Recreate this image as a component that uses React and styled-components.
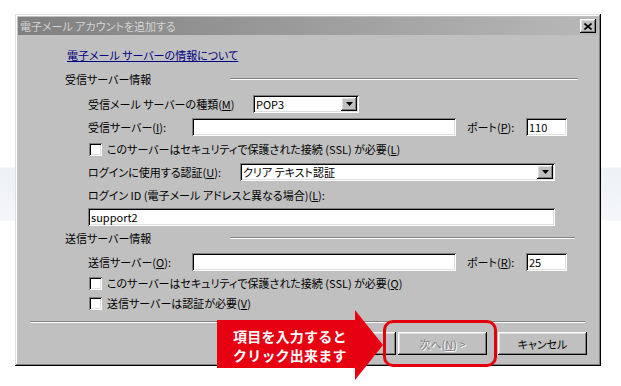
import React from 'react'
import styled, { createGlobalStyle } from 'styled-components'

const GlobalStyle = createGlobalStyle`
  html, body {
    margin: 0;
    padding: 0;
  }
  body {
    background: linear-gradient(to bottom, #fff 0, #fff 167px, #eef1f5 168px, #f4f6f9 220px, #fff 221px);
    font-family: "Noto Sans CJK JP", "Noto Sans", sans-serif;
  }
`

const raised = `
  box-shadow: inset -1px -1px #000, inset 1px 1px #fff, inset -2px -2px #808080, inset 2px 2px #dfdfdf;
`
const sunken = `
  box-shadow: inset 1px 1px #808080, inset -1px -1px #fff, inset 2px 2px #000, inset -2px -2px #dfdfdf;
`

const Page = styled.div`
  position: relative;
  width: 621px;
  height: 386px;
  padding: 14px 0 0 15px;
  box-sizing: border-box;
  overflow: hidden;
`

const Dialog = styled.div`
  width: 586px;
  height: 352px;
  box-sizing: border-box;
  padding: 3px;
  background: #c0c0c0;
  display: flex;
  flex-direction: column;
  font-size: 11px;
  color: #000;
  font-feature-settings: "palt";
  box-shadow: inset -1px -1px #000, inset 1px 1px #dfdfdf, inset -2px -2px #808080, inset 2px 2px #fff;
`

const TitleBar = styled.div`
  height: 18px;
  display: flex;
  align-items: center;
  justify-content: space-between;
  background: linear-gradient(to right, #808080, #b8b8b8);
  padding: 0 2px 0 2px;
`

const TitleText = styled.span`
  color: #d4d4d4;
  font-size: 11px;
  line-height: 18px;
`

const CloseButton = styled.div`
  width: 16px;
  height: 14px;
  background: #c0c0c0;
  display: flex;
  align-items: center;
  justify-content: center;
  ${raised}
`

const Row = styled.div`
  display: flex;
  align-items: center;
  flex-shrink: 0;
  height: ${p => p.$h || 14}px;
  margin-top: ${p => p.$mt || 0}px;
  padding-left: ${p => (p.$pl === undefined ? 70 : p.$pl)}px;
`

const Link = styled.a`
  color: #000080;
  text-decoration: underline;
  cursor: pointer;
`

const Label = styled.span`
  width: ${p => (p.$w ? `${p.$w}px` : 'auto')};
  flex-shrink: 0;
  white-space: nowrap;
  margin-left: ${p => p.$ml || 0}px;
`

const EtchedLine = styled.div`
  width: ${p => p.$w}px;
  height: 0;
  border-top: 1px solid #808080;
  border-bottom: 1px solid #fff;
  margin-left: ${p => p.$ml || 0}px;
`

const Field = styled.div`
  position: relative;
  width: ${p => p.$w}px;
  height: 18px;
  box-sizing: border-box;
  background: #fff;
  padding-left: 3px;
  line-height: 18px;
  white-space: nowrap;
  flex-shrink: 0;
  ${sunken}
`

const DropButton = styled.div`
  position: absolute;
  right: 2px;
  top: 2px;
  width: 16px;
  height: 14px;
  background: #c0c0c0;
  display: flex;
  align-items: center;
  justify-content: center;
  ${raised}
`

const Check = styled.div`
  width: 13px;
  height: 13px;
  box-sizing: border-box;
  background: #fff;
  margin-right: 5px;
  flex-shrink: 0;
  ${sunken}
`

const Footer = styled.div`
  display: flex;
  justify-content: flex-end;
  gap: 2px;
  height: 23px;
  margin-top: 9px;
  padding-right: 11px;
`

const Button = styled.div`
  width: 89px;
  height: 23px;
  box-sizing: border-box;
  background: #c0c0c0;
  display: flex;
  align-items: center;
  justify-content: center;
  margin-left: ${p => p.$ml || 0}px;
  color: ${p => (p.$disabled ? '#808080' : '#000')};
  text-shadow: ${p => (p.$disabled ? '1px 1px 0 #fff' : 'none')};
  ${raised}
`

const Callout = styled.div`
  position: absolute;
  left: 217px;
  top: 310px;
  width: 166px;
  height: 70px;
`

const CalloutShape = styled.svg`
  position: absolute;
  left: 0;
  top: 0;
`

const CalloutText = styled.div`
  position: relative;
  padding: 17px 0 0 16px;
  color: #fff;
  font-family: "Noto Sans CJK JP", sans-serif;
  font-weight: 700;
  font-size: 14px;
  line-height: 19px;
  letter-spacing: 0.2px;
`

const Highlight = styled.div`
  position: absolute;
  left: 383px;
  top: 320px;
  width: 114px;
  height: 47px;
  box-sizing: border-box;
  border: 3px solid #e3000b;
  border-radius: 10px;
`

function Arrow() {
  return (
    <svg width="7" height="4" viewBox="0 0 7 4">
      <path d="M0 0H7L3.5 4Z" fill="#000" />
    </svg>
  )
}

function Select({ w, value }) {
  return (
    <Field $w={w}>
      {value}
      <DropButton>
        <Arrow />
      </DropButton>
    </Field>
  )
}

export default function App() {
  return (
    <Page>
      <GlobalStyle />
      <Dialog>
        <TitleBar>
          <TitleText>電子メール アカウントを追加する</TitleText>
          <CloseButton>
            <svg width="8" height="7" viewBox="0 0 8 7">
              <path d="M0.5 0.5L7.5 6.5M7.5 0.5L0.5 6.5" stroke="#000" strokeWidth="1.6" />
            </svg>
          </CloseButton>
        </TitleBar>

        <Row $mt={13} $pl={49}>
          <Link>電子メール サーバーの情報について</Link>
        </Row>

        <Row $mt={10} $pl={47}>
          <Label $w={165}>受信サーバー情報</Label>
          <EtchedLine $w={348} />
        </Row>

        <Row $mt={9} $h={18}>
          <Label $w={165}>受信メール サーバーの種類(<u>M</u>)</Label>
          <Select w={106} value="POP3" />
        </Row>

        <Row $mt={5} $h={18}>
          <Label $w={104}>受信サーバー(<u>I</u>):</Label>
          <Field $w={264} />
          <Label $w={59} $ml={11}>ポート(<u>P</u>):</Label>
          <Field $w={41}>110</Field>
        </Row>

        <Row $mt={6} $pl={71}>
          <Check />
          <Label>このサーバーはセキュリティで保護された接続 (SSL) が必要(<u>L</u>)</Label>
        </Row>

        <Row $mt={7} $h={18}>
          <Label $w={152}>ログインに使用する認証(<u>U</u>):</Label>
          <Select w={315} value="クリア テキスト認証" />
        </Row>

        <Row $mt={7}>
          <Label>ログイン ID (電子メール アドレスと異なる場合)(<u>L</u>):</Label>
        </Row>

        <Row $mt={6} $h={18}>
          <Field $w={467}>support2</Field>
        </Row>

        <Row $mt={5} $pl={47}>
          <Label $w={165}>送信サーバー情報</Label>
          <EtchedLine $w={345} />
        </Row>

        <Row $mt={8} $h={18}>
          <Label $w={104}>送信サーバー(<u>O</u>):</Label>
          <Field $w={264} />
          <Label $w={59} $ml={11}>ポート(<u>R</u>):</Label>
          <Field $w={41}>25</Field>
        </Row>

        <Row $mt={5} $pl={71}>
          <Check />
          <Label>このサーバーはセキュリティで保護された接続 (SSL) が必要(<u>Q</u>)</Label>
        </Row>

        <Row $mt={6} $pl={71}>
          <Check />
          <Label>送信サーバーは認証が必要(<u>V</u>)</Label>
        </Row>

        <Row $mt={11} $h={2} $pl={12}>
          <EtchedLine $w={555} />
        </Row>

        <Footer>
          <Button />
          <Button $disabled>次へ(<u>N</u>) &gt;</Button>
          <Button $ml={9}>キャンセル</Button>
        </Footer>
      </Dialog>

      <Callout>
        <CalloutShape width="166" height="70" viewBox="0 0 166 70">
          <path d="M0 10H138V0L166 35L138 70V58H0Z" fill="#e60012" />
        </CalloutShape>
        <CalloutText>
          項目を入力すると
          <br />
          クリック出来ます
        </CalloutText>
      </Callout>
      <Highlight />
    </Page>
  )
}
